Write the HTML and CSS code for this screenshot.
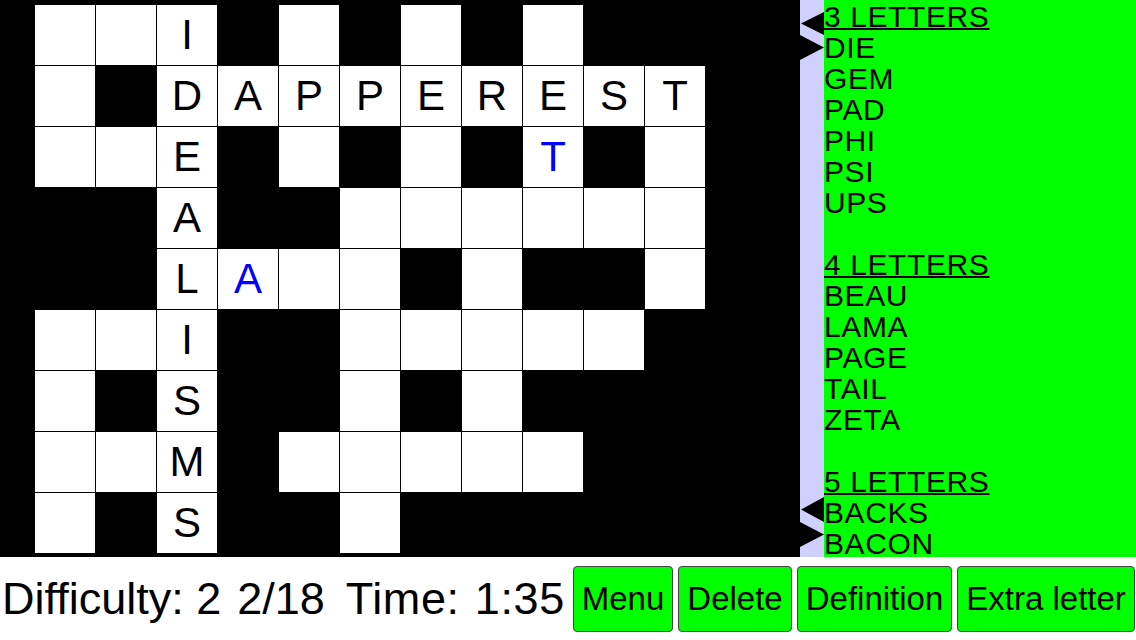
FILE: index.html
```html
<!DOCTYPE html>
<html>
<head>
<meta charset="utf-8">
<link rel="stylesheet" href="styles.css">
</head>
<body>
<div class="app">
  <div class="top">
    <div class="board">
      <div class="grid">
        <!-- row 0 -->
        <div class="c w"></div><div class="c w"></div><div class="c w">I</div><div class="c"></div><div class="c w"></div><div class="c"></div><div class="c w"></div><div class="c"></div><div class="c w"></div><div class="c"></div><div class="c"></div>
        <!-- row 1 -->
        <div class="c w"></div><div class="c"></div><div class="c w">D</div><div class="c w">A</div><div class="c w">P</div><div class="c w">P</div><div class="c w">E</div><div class="c w">R</div><div class="c w">E</div><div class="c w">S</div><div class="c w">T</div>
        <!-- row 2 -->
        <div class="c w"></div><div class="c w"></div><div class="c w">E</div><div class="c"></div><div class="c w"></div><div class="c"></div><div class="c w"></div><div class="c"></div><div class="c w blue">T</div><div class="c"></div><div class="c w"></div>
        <!-- row 3 -->
        <div class="c"></div><div class="c"></div><div class="c w">A</div><div class="c"></div><div class="c"></div><div class="c w"></div><div class="c w"></div><div class="c w"></div><div class="c w"></div><div class="c w"></div><div class="c w"></div>
        <!-- row 4 -->
        <div class="c"></div><div class="c"></div><div class="c w">L</div><div class="c w blue">A</div><div class="c w"></div><div class="c w"></div><div class="c"></div><div class="c w"></div><div class="c"></div><div class="c"></div><div class="c w"></div>
        <!-- row 5 -->
        <div class="c w"></div><div class="c w"></div><div class="c w">I</div><div class="c"></div><div class="c"></div><div class="c w"></div><div class="c w"></div><div class="c w"></div><div class="c w"></div><div class="c w"></div><div class="c"></div>
        <!-- row 6 -->
        <div class="c w"></div><div class="c"></div><div class="c w">S</div><div class="c"></div><div class="c"></div><div class="c w"></div><div class="c"></div><div class="c w"></div><div class="c"></div><div class="c"></div><div class="c"></div>
        <!-- row 7 -->
        <div class="c w"></div><div class="c w"></div><div class="c w">M</div><div class="c"></div><div class="c w"></div><div class="c w"></div><div class="c w"></div><div class="c w"></div><div class="c w"></div><div class="c"></div><div class="c"></div>
        <!-- row 8 -->
        <div class="c w"></div><div class="c"></div><div class="c w">S</div><div class="c"></div><div class="c"></div><div class="c w"></div><div class="c"></div><div class="c"></div><div class="c"></div><div class="c"></div><div class="c"></div>
      </div>
    </div>
    <div class="strip">
      <svg width="24" height="557" viewBox="0 0 24 557">
        <polygon points="24,12 1,23.5 24,35" fill="#000"/>
        <polygon points="0,35 24,47.5 0,60" fill="#000"/>
        <polygon points="24,497 1,509.5 24,522" fill="#000"/>
        <polygon points="0,522 24,534.5 0,547" fill="#000"/>
      </svg>
    </div>
    <div class="words">
      <div class="head">3 LETTERS</div>
      <div>DIE</div>
      <div>GEM</div>
      <div>PAD</div>
      <div>PHI</div>
      <div>PSI</div>
      <div>UPS</div>
      <div class="blank"></div>
      <div class="head">4 LETTERS</div>
      <div>BEAU</div>
      <div>LAMA</div>
      <div>PAGE</div>
      <div>TAIL</div>
      <div>ZETA</div>
      <div class="blank"></div>
      <div class="head">5 LETTERS</div>
      <div>BACKS</div>
      <div>BACON</div>
    </div>
  </div>
  <div class="bottom">
    <div class="status"><span class="diff">Difficulty: 2</span><span class="count">2/18</span><span class="time">Time: 1:35</span></div>
    <div class="btn">Menu</div>
    <div class="btn">Delete</div>
    <div class="btn">Definition</div>
    <div class="btn">Extra letter</div>
  </div>
</div>
</body>
</html>
```
FILE: styles.css
```css
html, body {
  margin: 0;
  padding: 0;
  background: #fff;
}
.app {
  width: 1136px;
  height: 640px;
  overflow: hidden;
  font-family: "Liberation Sans", Arial, sans-serif;
  color: #000;
}
.top {
  display: flex;
  height: 557px;
}
.board {
  width: 800px;
  background: #000;
  padding: 5px 0 0 35px;
  box-sizing: border-box;
}
.grid {
  display: grid;
  grid-template-columns: repeat(11, 60px);
  grid-auto-rows: 60px;
  gap: 1px;
}
.c {
  display: flex;
  align-items: center;
  justify-content: center;
  font-size: 42px;
  line-height: 1;
}
.w {
  background: #fff;
}
.blue {
  color: #0000ff;
}
.strip {
  width: 24px;
  background: #d0d0ff;
}
.strip svg {
  display: block;
}
.words {
  flex: 1;
  background: #00ff00;
  font-size: 30px;
  line-height: 31px;
  letter-spacing: 0.6px;
  padding-top: 1px;
}
.words .head {
  text-decoration: underline;
  text-decoration-thickness: 2px;
  text-underline-offset: 1px;
}
.words .blank {
  height: 31px;
}
.bottom {
  display: flex;
  align-items: center;
  height: 83px;
  padding-left: 2px;
}
.status {
  display: flex;
  font-size: 45px;
  margin-right: 8px;
  white-space: nowrap;
}
.status .count {
  margin-left: 16px;
}
.status .time {
  margin-left: 21px;
  word-spacing: 2px;
  letter-spacing: 0.6px;
}
.btn {
  height: 64px;
  display: flex;
  align-items: center;
  padding: 0 8px;
  margin-right: 5px;
  background: #00ff00;
  border: 1px solid #444;
  border-radius: 4px;
  font-size: 33px;
  white-space: nowrap;
}
```
